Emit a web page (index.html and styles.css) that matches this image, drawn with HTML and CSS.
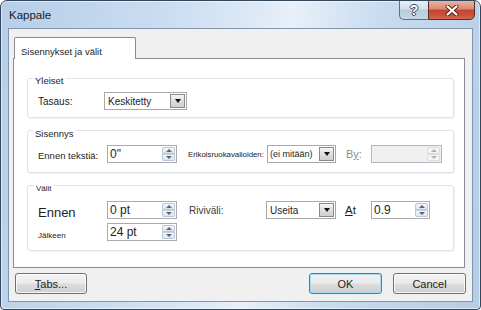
FILE: index.html
```html
<!DOCTYPE html>
<html>
<head>
<meta charset="utf-8">
<link rel="stylesheet" href="styles.css">
</head>
<body>
<div class="window">
  <div class="titlebar">
    <span class="title">Kappale</span>
    <div class="caption-btns">
      <div class="cbtn help">?</div>
      <div class="cbtn close">
        <svg width="14" height="11" viewBox="0 0 14 11"><path d="M2.5 1.5 L11.5 9.5 M11.5 1.5 L2.5 9.5" stroke="#5a2018" stroke-width="4" stroke-linecap="round" fill="none"/><path d="M2.5 1.5 L11.5 9.5 M11.5 1.5 L2.5 9.5" stroke="#fff" stroke-width="2.2" stroke-linecap="round" fill="none"/></svg>
      </div>
    </div>
  </div>
  <div class="client">
    <div class="tabs"><div class="tab">Sisennykset ja välit</div></div>
    <div class="panel">
      <div class="group g1">
        <div class="legend">Yleiset</div>
        <div class="row r-first">
          <span class="lbl w66">Tasaus:</span>
          <div class="combo w83"><span class="val">Keskitetty</span><span class="drop"></span></div>
        </div>
      </div>
      <div class="group g2">
        <div class="legend">Sisennys</div>
        <div class="row r-first">
          <span class="lbl w69 f95">Ennen tekstiä:</span>
          <div class="spin w70"><span class="val">0"</span><div class="arrows"><i class="up"></i><i class="dn"></i></div></div>
          <span class="lbl tiny ml11 w79">Erikoisruokavalioiden:</span>
          <div class="combo w69"><span class="val f9">(ei mitään)</span><span class="drop"></span></div>
          <span class="lbl dis ml10 w25">B<u>y</u>:</span>
          <div class="spin disabled w71"><span class="val"></span><div class="arrows"><i class="up"></i><i class="dn"></i></div></div>
        </div>
      </div>
      <div class="group g3">
        <div class="legend small">Välit</div>
        <div class="row r-first3">
          <span class="lbl w69 big">Ennen</span>
          <div class="spin w70"><span class="val">0 pt</span><div class="arrows"><i class="up"></i><i class="dn"></i></div></div>
          <span class="lbl gray ml12 w77">Riviväli:</span>
          <div class="combo w70"><span class="val">Useita</span><span class="drop"></span></div>
          <span class="lbl at ml9 w26"><u>A</u>t</span>
          <div class="spin w59"><span class="val">0.9</span><div class="arrows"><i class="up"></i><i class="dn"></i></div></div>
        </div>
        <div class="row r-second">
          <span class="lbl w69 tiny2">Jälkeen</span>
          <div class="spin w70"><span class="val">24 pt</span><div class="arrows"><i class="up"></i><i class="dn"></i></div></div>
        </div>
      </div>
    </div>
    <div class="buttons">
      <div class="btn tabsbtn"><span><u>T</u>abs...</span></div>
      <div class="btn ok default">OK</div>
      <div class="btn cancel">Cancel</div>
    </div>
  </div>
</div>
</body>
</html>
```
FILE: styles.css
```css
html, body {
  margin: 0;
  padding: 0;
}
body {
  font-family: "Liberation Sans", Arial, sans-serif;
  color: #1e1e1e;
  background: #fff;
}
.window {
  width: 481px;
  height: 310px;
  box-sizing: border-box;
  border: 1px solid #33475c;
  border-radius: 7px 7px 4px 4px;
  background: linear-gradient(100deg, #b6cee9 0%, #c9dcf1 30%, #dde9f6 48%, #e8f0f9 55%, #c8dbef 72%, #b4cce7 100%);
  box-shadow: inset 0 0 0 1px rgba(255,255,255,0.55);
  display: flex;
  flex-direction: column;
  overflow: hidden;
}
.titlebar {
  height: 27px;
  display: flex;
  align-items: flex-start;
}
.title {
  font-size: 11.5px;
  margin: 8px 0 0 8px;
  color: #1a1a1a;
}
.caption-btns {
  margin-left: auto;
  margin-right: 5px;
  margin-top: -1px;
  display: flex;
}
.cbtn {
  height: 20px;
  box-sizing: border-box;
  display: flex;
  align-items: center;
  justify-content: center;
}
.help {
  width: 29px;
  border: 1px solid #5b6f86;
  border-right: none;
  border-radius: 0 0 0 5px;
  background: linear-gradient(#e7eef6 0%, #d3dfeb 45%, #b9cadc 50%, #c6d6e6 100%);
  color: #fff;
  font-size: 14px;
  font-weight: bold;
  text-shadow: 1px 0 0 #3a4a5c, -1px 0 0 #3a4a5c, 0 1px 0 #3a4a5c, 0 -1px 0 #3a4a5c;
  line-height: 18px;
}
.close {
  width: 47px;
  border: 1px solid #5a2a24;
  border-radius: 0 0 5px 0;
  background: linear-gradient(#eab3a6 0%, #d98872 45%, #c4452f 50%, #c9533c 80%, #d66a4e 100%);
}
.client {
  margin-left: 7px;
  width: 465px;
  height: 274px;
  box-sizing: border-box;
  border: 1px solid #8196ad;
  background: #f0f0f0;
  display: flex;
  flex-direction: column;
}
.tabs {
  padding: 8px 0 0 4px;
  display: flex;
}
.tab {
  margin-left: 1px;
  width: 122px;
  height: 22px;
  box-sizing: border-box;
  border: 1px solid #898c95;
  border-bottom: none;
  border-radius: 2px 2px 0 0;
  background: #fff;
  font-size: 9.5px;
  padding: 8px 0 0 6px;
  margin-bottom: -1px;
  position: relative;
  z-index: 1;
}
.panel {
  margin-left: 4px;
  width: 452px;
  height: 210px;
  box-sizing: border-box;
  border: 1px solid #898c95;
  background: #fff;
  padding: 19px 0 0 13px;
}
.group {
  width: 427px;
  box-sizing: border-box;
  border: 1px solid #dde3e8;
  border-radius: 3px;
  box-shadow: 1px 1px 0 #f2f2f2;
}
.g1 { height: 40px; }
.g2 { height: 43px; margin-top: 12px; }
.g3 { height: 66px; margin-top: 12px; }
.legend {
  width: fit-content;
  height: 12px;
  line-height: 12px;
  font-size: 9.5px;
  background: #fff;
  padding: 0 2px;
  margin-left: 5px;
  margin-top: -3px;
}
.g1 .legend { margin-top: -4px; }
.legend.small { font-size: 8px; margin-left: 6px; }
.row {
  display: flex;
  align-items: center;
  height: 18px;
  padding-left: 10px;
}
.r-first { margin-top: 5px; }
.r-first3 { margin-top: 6px; }
.r-second { margin-top: 4px; }
.lbl {
  font-size: 10px;
  white-space: nowrap;
  flex: none;
}
.f95 { font-size: 9.5px; padding-top: 3px; }
.big { font-size: 13px; padding-top: 5px; }
.tiny { font-size: 7.8px; color: #222; }
.tiny2 { font-size: 8px; padding-top: 6px; color: #222; }
.gray { color: #3a3a3a; }
.dis { color: #8d8d8d; font-size: 11px; }
.at { font-size: 11.5px; }
.w25 { width: 25px; }
.w26 { width: 26px; }
.w59 { width: 59px; }
.w66 { width: 66px; }
.w69 { width: 69px; }
.w70 { width: 70px; }
.w71 { width: 71px; }
.w77 { width: 77px; }
.w79 { width: 79px; }
.w83 { width: 83px; }
.ml9 { margin-left: 9px; }
.ml10 { margin-left: 10px; }
.ml11 { margin-left: 11px; }
.ml12 { margin-left: 12px; }
.combo {
  flex: none;
  height: 18px;
  box-sizing: border-box;
  border: 1px solid #a9a9a9;
  background: #fff;
  display: flex;
  align-items: center;
}
.combo .val {
  flex: 1;
  font-size: 10px;
  padding-left: 3px;
  white-space: nowrap;
  overflow: hidden;
}
.combo .val.f9 { font-size: 9px; padding-left: 2px; }
.drop {
  flex: none;
  width: 15px;
  height: 14px;
  margin-right: 1px;
  box-sizing: border-box;
  border: 1px solid #8a8a8a;
  background: linear-gradient(#f6f6f6, #dcdcdc 55%, #cfcfcf);
  display: flex;
  align-items: center;
  justify-content: center;
}
.drop::before {
  content: "";
  border-left: 3.5px solid transparent;
  border-right: 3.5px solid transparent;
  border-top: 4px solid #111;
}
.spin {
  flex: none;
  height: 18px;
  box-sizing: border-box;
  border: 1px solid #a9abb0;
  background: #fff;
  display: flex;
}
.spin .val {
  flex: 1;
  font-size: 12px;
  line-height: 16px;
  padding-left: 2px;
  white-space: nowrap;
}
.arrows {
  flex: none;
  width: 13px;
  margin: 1px 1px 1px 0;
  display: flex;
  flex-direction: column;
}
.arrows i {
  flex: 1;
  box-sizing: border-box;
  border: 1px solid #b9c6d4;
  background: linear-gradient(#f4f7fb, #dde5ee);
  display: flex;
  align-items: center;
  justify-content: center;
}
.arrows i.up { border-radius: 2px 2px 0 0; }
.arrows i.dn { border-radius: 0 0 2px 2px; border-top-color: #c9d3de; }
.arrows i.up::before {
  content: "";
  border-left: 3px solid transparent;
  border-right: 3px solid transparent;
  border-bottom: 3px solid #56657a;
}
.arrows i.dn::before {
  content: "";
  border-left: 3px solid transparent;
  border-right: 3px solid transparent;
  border-top: 3px solid #56657a;
}
.spin.disabled {
  background: #f0f0f0;
  border-color: #b4b8bc;
}
.spin.disabled .arrows i {
  background: #f4f4f4;
  border-color: #d8dde2;
}
.spin.disabled .arrows i.up::before { border-bottom-color: #a9b1ba; }
.spin.disabled .arrows i.dn::before { border-top-color: #a9b1ba; }
.buttons {
  display: flex;
  margin-top: 5px;
  padding: 0 6px;
}
.btn {
  flex: none;
  height: 21px;
  box-sizing: border-box;
  border: 1px solid #707070;
  border-radius: 3px;
  background: linear-gradient(#f2f2f2 0%, #ebebeb 48%, #dddddd 52%, #cfcfcf 100%);
  box-shadow: inset 0 0 0 1px rgba(255,255,255,0.8);
  font-size: 11px;
  display: flex;
  align-items: center;
  justify-content: center;
  color: #1e1e1e;
}
.tabsbtn { width: 72px; }
.ok { width: 73px; margin-left: auto; }
.cancel { width: 73px; margin-left: 11px; }
.default {
  border-color: #3c7fb1;
  box-shadow: inset 0 0 0 1px #a6dcf6;
}
```
